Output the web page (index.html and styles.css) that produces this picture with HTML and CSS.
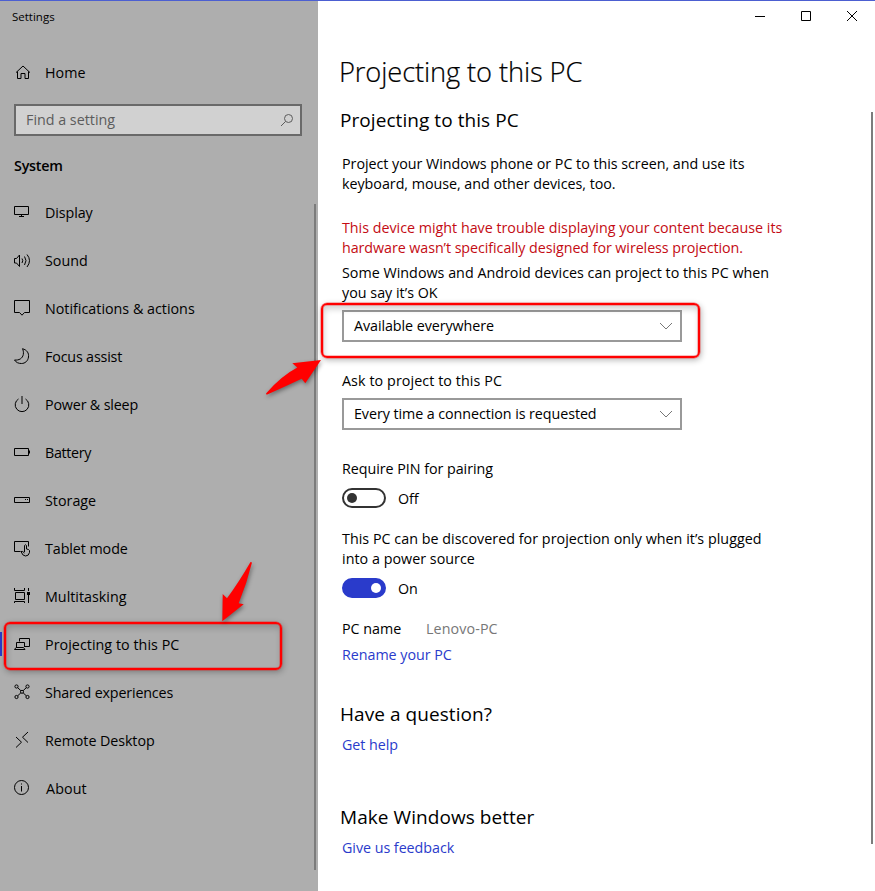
FILE: index.html
```html
<!DOCTYPE html>
<html lang="en">
<head>
<meta charset="utf-8">
<title>Settings</title>
<link rel="stylesheet" href="styles.css">
</head>
<body>
<div class="window">
  <aside class="sidebar">
    <div class="app-name">Settings</div>
    <a class="nav-item home"><svg class="icon" viewBox="0 0 32 48"><path d="M16 24.6 23 18l7 6.600M17.500 23.500v7h3.500v-5h4v5h3.500v-7"/></svg><span>Home</span></a>
    <div class="search"><span>Find a setting</span><svg viewBox="0 0 14 14"><circle cx="8.500" cy="5.500" r="4"/><path d="M5.500 8.500 1 13"/></svg></div>
    <h2 class="group">System</h2>
    <nav>
      <a class="nav-item"><svg class="icon" viewBox="0 0 32 48"><path d="M14.500 18.500h14v8h-14zM21.500 27v2M19 28.500h5"/></svg><span class="t-display">Display</span></a>
      <a class="nav-item"><svg class="icon" viewBox="0 0 32 48"><path d="M14.500 22.500h2l3-3.500v11.500l-3-3.500h-2zM22 22.500q1.500 2 0 4.500M24.500 20.500q3 4 0 8.500M27 18.500q5 6 0 12.500"/></svg><span>Sound</span></a>
      <a class="nav-item"><svg class="icon" viewBox="0 0 32 48"><path d="M14.500 16.500h15v12h-5l-2.500 2.700-2.500-2.700h-5z"/></svg><span>Notifications &amp; actions</span></a>
      <a class="nav-item"><svg class="icon" viewBox="0 0 32 48"><path d="M22.500 16.700C27 18 29 21 28.500 25c-.5 4-3.500 6.500-7 6.500-3 0-5.500-1-7-3.500 4.500.5 8-1.500 8.800-5.500.4-2.500-.1-4.200-.8-5.800z"/></svg><span class="t-focus">Focus assist</span></a>
      <a class="nav-item"><svg class="icon" viewBox="0 0 32 48"><path d="M18.500 19a6.800 6.800 0 1 0 7 0M22 16v8"/></svg><span class="t-power">Power &amp; sleep</span></a>
      <a class="nav-item"><svg class="icon" viewBox="0 0 32 48"><path d="M14.500 20.500h14v7h-14zM29.500 22.500v3"/></svg><span class="t-battery">Battery</span></a>
      <a class="nav-item"><svg class="icon" viewBox="0 0 32 48"><path d="M14.500 21.500h15v5h-15zM25 23.500h1M27 23.500h1"/></svg><span>Storage</span></a>
      <a class="nav-item"><svg class="icon" viewBox="0 0 32 48"><path d="M20.500 27.500h-6v-10h14v5M24.500 28v-6.500q1-1.500 2 0v3.500l2 .5q1.500.5 1 3-.7 3.500-4 3.500-3 0-4.500-4.500 1.500-.7 3.500 1.500"/></svg><span class="t-tablet">Tablet mode</span></a>
      <a class="nav-item"><svg class="icon" viewBox="0 0 32 48"><path d="M14.500 16v2.500h10V16M15.500 20.500h9v7h-9zM14.500 31v-1.500h10V31M28.500 16v3M28.500 23v8"/><path class="solid" d="M27 20h3v3h-3z"/></svg><span>Multitasking</span></a>
      <a class="nav-item current"><svg class="icon" viewBox="0 0 32 48"><path d="M19.500 21.500v-3h10v8h-5M16.500 27v-4.500h8V27M14.500 29.500l1.500-2h7.500l1.500 2z"/></svg><span class="t-project">Projecting to this PC</span></a>
      <a class="nav-item"><svg class="icon" viewBox="0 0 32 48"><circle cx="16.500" cy="18.500" r="1.600"/><circle cx="27.500" cy="18.500" r="1.600"/><circle cx="16.500" cy="29" r="1.600"/><circle cx="27.500" cy="29" r="1.600"/><circle cx="22" cy="23.800" r="1.500"/><path d="M17.700 19.700l3.200 3M26.300 19.700l-3.200 3M17.700 27.800l3.200-3M26.300 27.800l-3.200-3"/></svg><span class="t-shared">Shared experiences</span></a>
      <a class="nav-item"><svg class="icon" viewBox="0 0 32 48"><path d="M16 21l5.500 5.200L16 31.500M28 16l-5.500 5.200L28 26.500"/></svg><span class="t-remote">Remote Desktop</span></a>
      <a class="nav-item"><svg class="icon" viewBox="0 0 32 48"><circle cx="21.500" cy="23.500" r="7"/><path d="M21.500 22v5.500M21.500 19.500v1"/></svg><span class="t-about">About</span></a>
    </nav>
    <i class="side-scroll"></i>
  </aside>
  <main class="content">
    <div class="controls"><svg viewBox="0 0 115 32"><path d="M5 15.500h10M51.500 10.500h9v9h-9zM97 10l10 10M107 10l-10 10"/></svg></div>
    <h1>Projecting to this PC</h1>
    <h2 class="h-project">Projecting to this PC</h2>
    <p class="intro"><span>Project your Windows phone or PC to this screen, and use its</span><br><span>keyboard, mouse, and other devices, too.</span></p>
    <p class="warning"><span>This device might have trouble displaying your content because its</span><br><span class="tight">hardware wasn’t specifically designed for wireless projection.</span></p>
    <p class="lead"><span>Some Windows and Android devices can project to this PC when</span><br><span>you say it’s OK</span></p>
    <div class="select"><span>Available everywhere</span><svg viewBox="0 0 14 8"><path d="M1 1l6 6 6-6"/></svg></div>
    <p class="ask">Ask to project to this PC</p>
    <div class="select"><span>Every time a connection is requested</span><svg viewBox="0 0 14 8"><path d="M1 1l6 6 6-6"/></svg></div>
    <p class="pin">Require PIN for pairing</p>
    <div class="switch-row"><i class="switch"></i><span>Off</span></div>
    <p class="plugged"><span>This PC can be discovered for projection only when it’s plugged</span><br><span>into a power source</span></p>
    <div class="switch-row"><i class="switch on"></i><span>On</span></div>
    <div class="pc-name"><span class="label">PC name</span><span class="value">Lenovo-PC</span></div>
    <a class="link rename">Rename your PC</a>
    <h2 class="h-question">Have a question?</h2>
    <a class="link">Get help</a>
    <h2 class="h-better">Make Windows better</h2>
    <a class="link">Give us feedback</a>
    <i class="main-scroll"></i>
  </main>
  <div class="callout callout-select"></div>
  <div class="callout callout-nav"></div>
  <svg class="arrows" viewBox="0 0 875 891"><path d="M321 360 292.300 363.300l5 4.200Q281 376 266 393.500l.7 1.200Q284 387 301.700 378.700l3.600 4.600zM222.300 621.300l.4-27.300 4.300 4.300Q239 582 250.500 562l1.500.5Q247 583 238.700 603.300l5 1z"/></svg>
</div>
</body>
</html>
```
FILE: styles.css
```css
* { box-sizing: border-box; }
body { margin: 0; font: 14.3px/20px "Open Sans", "Noto Sans", sans-serif; color: #000; }
h1, h2, p { margin: 0; font-weight: 400; }
svg { display: block; fill: none; stroke: #000; }
span { white-space: nowrap; }
.window { position: relative; display: flex; width: 875px; height: 891px; overflow: hidden; background: #fff; border-top: 1px solid #4c5fd1; }
.sidebar { position: relative; width: 318px; background: #aeaeae; }
.app-name { height: 47px; padding: 6px 0 0 12px; font-size: 11.5px; }
.nav-item { display: flex; align-items: center; height: 48px; gap: 13px; }
.nav-item span { padding-top: 2px; }
.icon { width: 32px; height: 48px; flex: none; }
.icon .solid { fill: #000; stroke: none; }
.t-display { letter-spacing: -.1px; }
.t-focus, .t-power, .t-shared { letter-spacing: -.17px; }
.t-battery { letter-spacing: -.35px; }
.t-tablet, .t-remote { letter-spacing: -.08px; }
.t-project { letter-spacing: .04px; }
.t-about { margin-left: 1px; letter-spacing: .1px; }
.search { display: flex; align-items: center; justify-content: space-between; width: 288px; height: 32px; margin: 8px 0 0 14px; padding: 0 6px 0 10px; border: 2px solid #696969; background: #d1d1d1; color: #5c5c5c; }
.search svg { width: 14px; height: 14px; stroke: #5c5c5c; }
.group { padding-left: 14px; margin: 20px 0 12px; height: 20px; font-size: 14.3px; font-weight: 600; letter-spacing: -.2px; }
.current { background: linear-gradient(#2a3bcb, #2a3bcb) 0 12px / 2px 24px no-repeat; }
.side-scroll { position: absolute; left: 314px; top: 203px; width: 2px; height: 666px; background: #7c7c7c; }
.content { position: relative; flex: 1; padding-left: 24px; }
.controls { height: 32px; padding-left: 408px; }
.controls svg { width: 115px; height: 32px; }
h1 { margin: 19px 0 0 -3px; font-size: 27.3px; line-height: 40px; font-weight: 300; letter-spacing: -.12px; -webkit-text-stroke: .2px #000; }
.content h2 { margin-left: -2px; font-size: 19px; line-height: 28px; letter-spacing: .06px; }
.content .h-project { margin-top: 14px; margin-bottom: 20px; }
.intro { letter-spacing: -.03px; }
.warning { margin-top: 24px; color: #c40c14; letter-spacing: -.01px; }
.tight { letter-spacing: -.07px; }
.lead { margin-top: 5px; letter-spacing: .015px; }
.select { display: flex; align-items: center; justify-content: space-between; width: 340px; height: 32px; margin-top: 7px; padding: 0 7px 0 10px; border: 2px solid #999; letter-spacing: -.07px; }
.select svg { width: 14px; height: 8px; stroke: #777; }
.ask { margin-top: 29px; margin-bottom: 7px; letter-spacing: .08px; }
.pin { margin-top: 29px; letter-spacing: -.04px; }
.switch-row { display: flex; align-items: center; gap: 12px; height: 20px; margin-top: 9px; }
.switch-row span { padding-top: 1px; }
.switch { display: flex; align-items: center; width: 44px; height: 20px; padding: 0 3px; border: 2px solid #333; border-radius: 10px; }
.switch::before { content: ""; width: 10px; height: 10px; border-radius: 50%; background: #333; }
.switch.on { justify-content: flex-end; border-color: #2a3bcb; background: #2a3bcb; }
.switch.on::before { background: #fff; }
.plugged { margin-top: 21px; letter-spacing: .03px; }
.pc-name { display: flex; margin-top: 21px; }
.pc-name .label { width: 84px; }
.pc-name .value { color: #777; letter-spacing: .1px; }
.link { display: block; color: #2a3bcb; letter-spacing: -.04px; }
.rename { margin-top: 6px; }
.content .h-question { margin-top: 35px; margin-bottom: 7px; }
.content .h-better { margin-top: 48px; margin-bottom: 7px; }
.main-scroll { position: absolute; right: 2px; top: 111px; width: 2px; height: 732px; background: #7c7c7c; }
.callout { position: absolute; border: 2px solid #f00; border-radius: 6px; box-shadow: 0 0 0 .5px rgba(255,0,0,.5), 1px 2px 6px rgba(0,0,0,.3), inset 0 0 0 .5px rgba(255,0,0,.5), inset 1px 4px 6px rgba(0,0,0,.18); }
.callout-select { left: 321px; top: 302px; width: 379px; height: 55px; }
.callout-nav { left: 4px; top: 621px; width: 278px; height: 48px; }
.arrows { position: absolute; left: 0; top: -1px; width: 875px; height: 891px; filter: drop-shadow(1px 2px 2px rgba(0,0,0,.4)); }
.arrows path { fill: red; stroke: none; }
```
